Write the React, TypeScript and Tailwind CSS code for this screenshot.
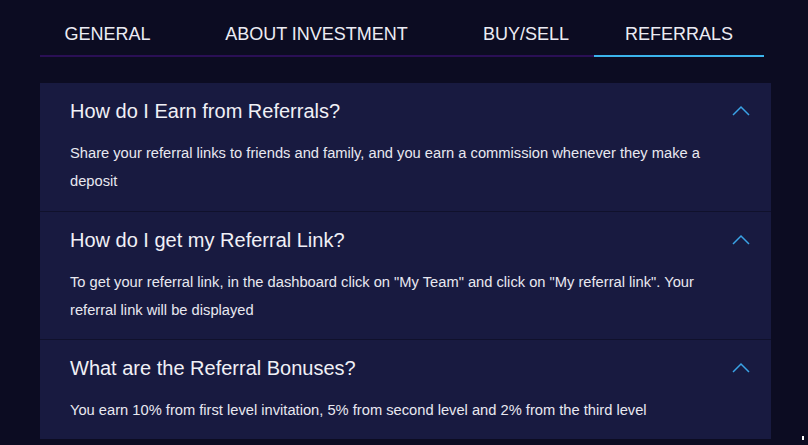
import React from "react";

const tabs = [
  { label: "GENERAL", w: "w-[135px]", active: false },
  { label: "ABOUT INVESTMENT", w: "w-[283px]", active: false },
  { label: "BUY/SELL", w: "w-[136px]", active: false },
  { label: "REFERRALS", w: "w-[170px]", active: true },
];

const faqs = [
  {
    q: "How do I Earn from Referrals?",
    a: "Share your referral links to friends and family, and you earn a commission whenever they make a deposit",
  },
  {
    q: "How do I get my Referral Link?",
    a: 'To get your referral link, in the dashboard click on "My Team" and click on "My referral link". Your referral link will be displayed',
  },
  {
    q: "What are the Referral Bonuses?",
    a: "You earn 10% from first level invitation, 5% from second level and 2% from the third level",
  },
];

function Chevron() {
  return (
    <svg width="18" height="11" viewBox="0 0 18 11" fill="none" className="mt-[-2px]">
      <path d="M1 10 L9 2 L17 10" stroke="#3aa3e6" strokeWidth="1.5" />
    </svg>
  );
}

export default function App() {
  return (
    <div
      className="w-[808px] h-[445px] bg-[#0c0c22] overflow-hidden relative"
      style={{ fontFamily: '"Liberation Sans", Arial, sans-serif' }}
    >
      <div className="pl-[40px] pt-[17px]">
        <div className="flex w-[724px] border-b-2 border-[#2a0f55]">
          {tabs.map((t) => (
            <div
              key={t.label}
              className={`${t.w} h-[40px] flex items-start justify-center text-[18px] leading-[34px] text-[#ececf4] -mb-[2px] ${
                t.active ? "border-b-2 border-[#3bb4ec]" : ""
              }`}
            >
              {t.label}
            </div>
          ))}
        </div>
        <div className="mt-[26px] w-[731px] flex flex-col gap-[1px] bg-[#10112c]">
          {faqs.map((f, i) => (
            <div
              key={i}
              className={`bg-[#181a40] pl-[30px] pr-[21px] pt-[16px] ${i === 0 ? "pb-[16px]" : "pb-[15px]"}`}
            >
              <div className="flex items-center justify-between h-[24px]">
                <div className="text-[20px] leading-[24px] text-[#f0f0f6]">{f.q}</div>
                <Chevron />
              </div>
              <div className="mt-[16px] pr-[9px] text-[14.7px] leading-[28px] text-[#e8e8f0]">{f.a}</div>
            </div>
          ))}
        </div>
      </div>
      <div className="absolute left-[802px] top-[436px] w-[2px] h-[4px] bg-white" />
    </div>
  );
}
